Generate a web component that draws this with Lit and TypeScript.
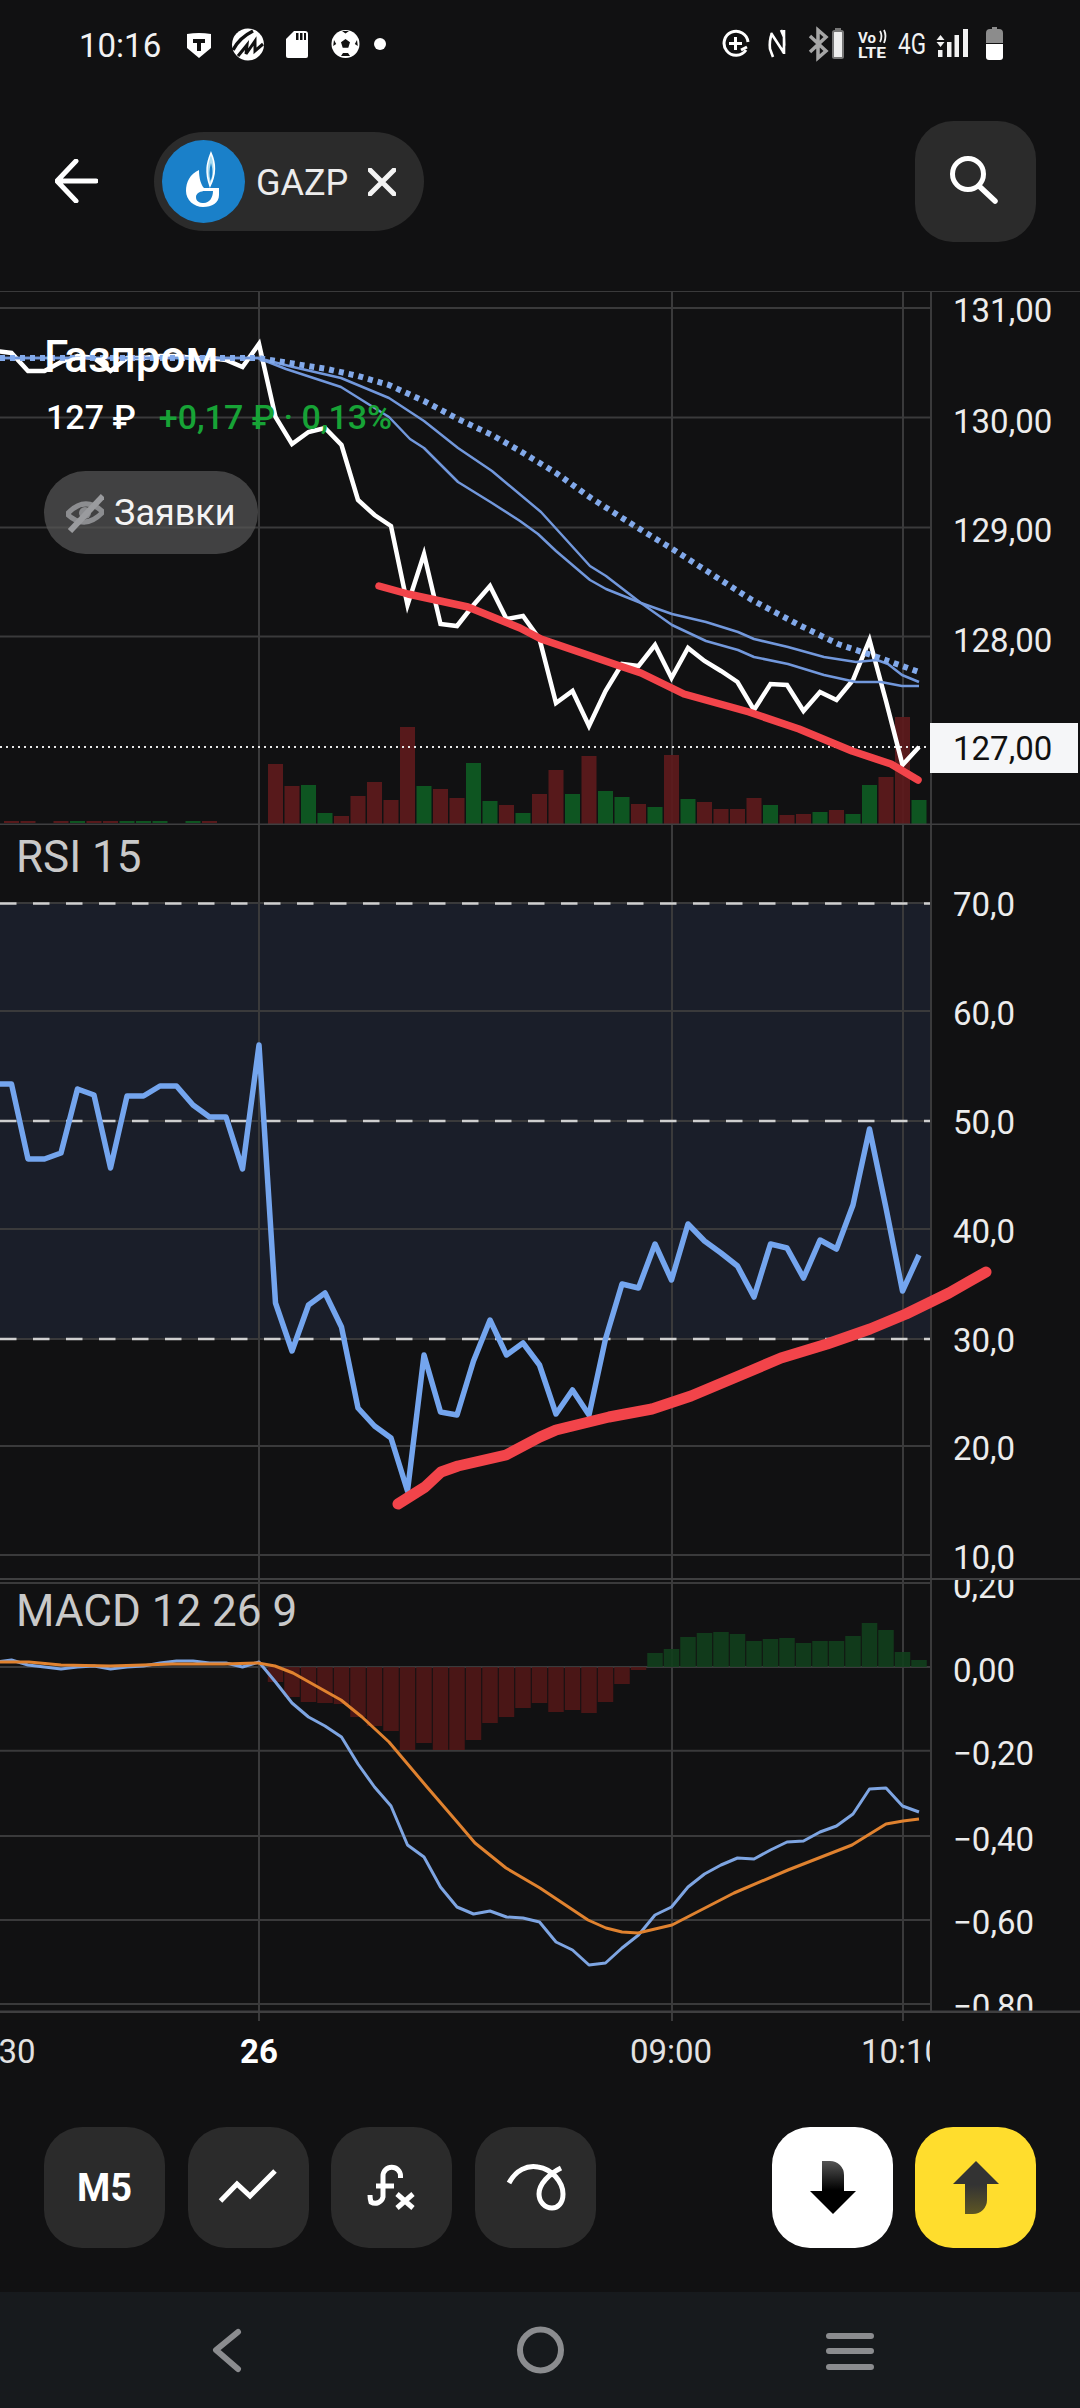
import { LitElement, html, svg, css } from 'lit';
import { customElement } from 'lit/decorators.js';

// all chart data is in page pixels, each pane's viewBox starts at its page y
const STEP = 16.5;
const ORIGIN = 259;
const FIRST = -16;
const CHART_RIGHT = 930;
const VERTICALS = [259, 672, 903];

const barX = (i: number) => ORIGIN + STEP * i;
const series = (ys: number[]) => ys.map((y, n) => `${barX(FIRST + n)},${y}`).join(' ');
const points = (pts: number[][]) => pts.map((p) => p.join(',')).join(' ');

const PRICE = [
  351, 353, 371, 371, 362, 356, 358, 371, 358, 358, 356, 356, 358, 358, 360, 367, 344, 417, 444, 432, 428, 445, 500,
  515, 526, 605, 554, 624, 626, 605, 586, 619, 616, 639, 703, 691, 726, 691, 664, 666, 645, 678, 648, 661, 671, 682,
  710, 684, 685, 711, 692, 700, 680, 640, 701, 765, 747,
];
const EMA_A = [
  [0, 358], [258, 358], [293, 367], [341, 378], [389, 398], [424, 421], [458, 448], [492, 471], [541, 512], [590, 566],
  [606, 576], [641, 603], [672, 625], [706, 641], [738, 650], [754, 657], [788, 664], [824, 675], [856, 682], [881, 682],
  [902, 686], [919, 686],
];
const EMA_B = [
  [0, 358], [258, 358], [286, 369], [341, 387], [389, 417], [410, 439], [424, 448], [458, 482], [492, 503], [520, 521],
  [538, 534], [556, 551], [590, 580], [606, 589], [641, 603], [672, 614], [706, 622], [738, 632], [754, 639], [788, 647],
  [824, 657], [856, 662], [877, 660], [888, 664], [902, 675], [919, 682],
];
const EMA_SLOW = [
  [0, 358], [258, 358], [327, 369], [358, 376], [389, 385], [424, 401], [458, 419], [492, 435], [520, 451], [556, 473],
  [591, 498], [638, 528], [674, 550], [713, 575], [752, 600], [799, 625], [838, 644], [877, 657], [919, 672],
];
const DRAWN_MAIN = [
  [379, 586], [408, 594], [468, 607], [520, 628], [541, 639], [620, 666], [641, 673], [684, 694], [749, 712], [799, 729],
  [852, 751], [891, 764], [918, 780],
];
const DRAWN_RSI = [
  [398, 1504], [425, 1487], [441, 1472], [458, 1466], [506, 1455], [540, 1437], [556, 1430], [609, 1417], [652, 1409],
  [691, 1396], [741, 1375], [781, 1358], [827, 1344], [870, 1329], [906, 1314], [949, 1293], [970, 1281], [986, 1272],
];
const RSI = [
  1084, 1084, 1159, 1159, 1153, 1089, 1095, 1168, 1096, 1096, 1086, 1086, 1105, 1117, 1117, 1169, 1045, 1303, 1351,
  1305, 1293, 1327, 1408, 1426, 1438, 1491, 1355, 1412, 1415, 1361, 1320, 1355, 1343, 1365, 1414, 1390, 1415, 1339,
  1284, 1288, 1244, 1280, 1224, 1241, 1253, 1266, 1297, 1244, 1248, 1278, 1240, 1249, 1205, 1129, 1208, 1291, 1255,
];
const MACD = [
  1662, 1660, 1665, 1667, 1669, 1667, 1666, 1669, 1667, 1666, 1663, 1661, 1661, 1663, 1663, 1667, 1662, 1682, 1703,
  1717, 1726, 1737, 1764, 1787, 1806, 1845, 1857, 1887, 1907, 1914, 1911, 1917, 1918, 1922, 1942, 1950, 1965, 1963,
  1948, 1935, 1915, 1907, 1887, 1874, 1865, 1858, 1859, 1850, 1842, 1841, 1832, 1826, 1814, 1789, 1788, 1806, 1812,
];
const SIGNAL = [
  [0, 1662], [29, 1662], [61, 1665], [110, 1666], [143, 1665], [172, 1664], [224, 1664], [258, 1663], [275, 1666],
  [293, 1673], [341, 1700], [362, 1717], [389, 1742], [427, 1787], [458, 1823], [475, 1843], [506, 1868], [540, 1888],
  [588, 1920], [606, 1928], [622, 1932], [638, 1933], [672, 1925], [734, 1893], [788, 1870], [852, 1845], [886, 1824],
  [903, 1821], [919, 1819],
];

// volume bars from i=1: top y and colour
const VOLUME: [number, 'r' | 'g'][] = [
  [764, 'r'], [786, 'r'], [785, 'g'], [813, 'g'], [816, 'r'], [796, 'r'], [782, 'r'], [800, 'r'], [727, 'r'], [786, 'g'],
  [789, 'r'], [798, 'r'], [763, 'g'], [801, 'g'], [805, 'r'], [813, 'g'], [794, 'r'], [770, 'r'], [794, 'g'], [756, 'r'],
  [791, 'g'], [797, 'g'], [804, 'r'], [807, 'g'], [755, 'r'], [799, 'g'], [802, 'r'], [809, 'r'], [809, 'r'], [798, 'r'],
  [805, 'g'], [815, 'r'], [814, 'r'], [812, 'g'], [810, 'r'], [814, 'g'], [785, 'g'], [777, 'r'], [717, 'r'], [800, 'g'],
];
const TINY_VOLUME: [number, 'r' | 'g'][] = [
  [-15, 'r'], [-14, 'r'], [-12, 'r'], [-11, 'g'], [-10, 'r'], [-9, 'r'], [-8, 'g'], [-7, 'g'], [-6, 'g'], [-4, 'g'], [-3, 'r'],
];
// macd histogram from i=1, far end of each bar
const HIST = [
  1682, 1697, 1702, 1703, 1704, 1717, 1726, 1731, 1750, 1743, 1750, 1750, 1740, 1723, 1717, 1708, 1703, 1712, 1710, 1713,
  1702, 1684, 1670, 1653, 1649, 1637, 1633, 1632, 1634, 1641, 1639, 1638, 1643, 1641, 1641, 1636, 1623, 1630, 1652, 1660,
];
const HIST_ZERO = 1667;

const PRICE_LABELS: [string, number][] = [['131,00', 322], ['130,00', 433], ['129,00', 542], ['128,00', 652]];
const RSI_LABELS: [string, number][] = [
  ['70,0', 916], ['60,0', 1025], ['50,0', 1134], ['40,0', 1243], ['30,0', 1352], ['20,0', 1460], ['10,0', 1569],
];
const MACD_LABELS: [string, number][] = [
  ['0,20', 1598], ['0,00', 1682], ['−0,20', 1765], ['−0,40', 1851], ['−0,60', 1934], ['−0,80', 2018],
];

const hLines = (ys: number[]) =>
  ys.map((y) => svg`<line class="grid" x1="0" x2=${CHART_RIGHT} y1=${y} y2=${y}></line>`);
const vLines = (y1: number, y2: number) =>
  VERTICALS.map((x) => svg`<line class="grid" x1=${x} x2=${x} y1=${y1} y2=${y2}></line>`);
const labels = (items: [string, number][]) =>
  items.map(([t, y]) => svg`<text class="axis-label" x="953" y=${y}>${t}</text>`);

@customElement('app-root')
export class AppRoot extends LitElement {
  static styles = css`
    :host {
      display: block;
      width: 1080px;
      height: 2408px;
      background: #111112;
      color: #fff;
      font-family: Roboto, 'Noto Sans', sans-serif;
      overflow: hidden;
    }
    svg {
      display: block;
    }
    .status {
      height: 90px;
      display: flex;
      align-items: center;
      justify-content: space-between;
      padding: 0 77px 0 79px;
    }
    .status-left {
      display: flex;
      align-items: center;
      gap: 26px;
    }
    .time {
      font-size: 33px;
      color: #f2f2f2;
    }
    .toolbar {
      height: 201px;
      box-sizing: border-box;
      padding: 31px 44px 0 55px;
      display: flex;
      align-items: flex-start;
    }
    .back {
      margin: 38px 56px 0 0;
    }
    .chip {
      height: 99px;
      margin-top: 11px;
      width: 270px;
      box-sizing: border-box;
      padding-left: 8px;
      border-radius: 50px;
      background: #2b2b2b;
      display: flex;
      align-items: center;
    }
    .chip-name {
      font-size: 36px;
      line-height: 44px;
      padding-top: 2px;
      color: #ececec;
      margin: 0 20px 0 11px;
    }
    .square {
      width: 121px;
      height: 121px;
      border-radius: 38px;
      background: #2b2b2b;
      display: flex;
      align-items: center;
      justify-content: center;
      flex: none;
    }
    .search {
      margin-left: auto;
    }
    .pane {
      position: relative;
    }
    .grid {
      stroke: #3a3a3b;
      stroke-width: 2;
    }
    .edge {
      stroke: #3f3f40;
      stroke-width: 3;
    }
    .band {
      fill: #1a1e29;
    }
    .dash {
      stroke: #cfcfcf;
      stroke-width: 2.5;
      stroke-dasharray: 16.5 16.5;
    }
    .last-price {
      stroke: #e8e8e8;
      stroke-width: 2;
      stroke-dasharray: 2 4;
    }
    .line {
      fill: none;
      stroke-linejoin: round;
    }
    .price-line {
      stroke: #fff;
      stroke-width: 4.5;
      stroke-linejoin: miter;
    }
    .ema {
      stroke: #7298dc;
      stroke-width: 2.5;
    }
    .ema-slow {
      stroke: #82a9ea;
      stroke-width: 6;
      stroke-dasharray: 5 5;
    }
    .drawn {
      stroke: #f2444a;
      stroke-linecap: round;
    }
    .rsi-line {
      stroke: #74a5ee;
      stroke-width: 5.5;
    }
    .macd-line {
      stroke: #7ea5e2;
      stroke-width: 3;
    }
    .signal-line {
      stroke: #e0822f;
      stroke-width: 3;
    }
    .vol-r {
      fill: #5c1a1c;
      fill-opacity: 0.93;
    }
    .vol-g {
      fill: #0e5a22;
      fill-opacity: 0.93;
    }
    .hist-r {
      fill: #4e1717;
      fill-opacity: 0.95;
    }
    .hist-g {
      fill: #123f1d;
      fill-opacity: 0.9;
    }
    .axis-label {
      font-size: 33px;
      fill: #ececec;
    }
    .tag {
      fill: #f5f6f8;
    }
    .tag-label {
      font-size: 33px;
      fill: #111;
    }
    .pane-title {
      font-size: 44px;
      fill: #c9c9c9;
    }
    .tick {
      font-size: 33px;
      fill: #e2e2e2;
      text-anchor: middle;
    }
    .tick-day {
      font-weight: 700;
      fill: #fff;
    }
    .legend {
      position: absolute;
      left: 44px;
      top: 44px;
    }
    .legend-name {
      font-size: 44px;
      line-height: 44px;
      font-weight: 500;
    }
    .legend-row {
      margin-top: 18px;
      display: flex;
      gap: 23px;
      font-size: 34px;
      line-height: 40px;
      font-weight: 500;
      padding-left: 2px;
    }
    .legend-change {
      color: #17a336;
    }
    .orders {
      margin-top: 34px;
      width: 214px;
      height: 83px;
      box-sizing: border-box;
      padding-left: 22px;
      border-radius: 42px;
      background: rgba(84, 84, 84, 0.72);
      display: flex;
      align-items: center;
      gap: 10px;
      font-size: 36px;
      color: #f4f4f4;
    }
    .actions {
      height: 165px;
      box-sizing: border-box;
      padding: 0 44px 44px;
      display: flex;
      gap: 22.5px;
    }
    .m5 {
      font-size: 38px;
      font-weight: 700;
    }
    .sell {
      background: #fff;
      margin-left: auto;
    }
    .buy {
      background: #ffdd2d;
    }
    .nav {
      height: 116px;
      background: #171a1d;
    }
    .icon-stroke {
      fill: none;
      stroke: #fff;
      stroke-width: 5;
    }
    .nav-stroke {
      fill: none;
      stroke: #8b8c8f;
      stroke-width: 6;
      stroke-linecap: round;
      stroke-linejoin: round;
    }
    .sb-text {
      font-size: 29px;
      fill: #f2f2f2;
    }
    .sb-small {
      font-size: 15px;
      font-weight: 700;
      fill: #f2f2f2;
    }
  `;

  private statusLeftIcons() {
    return html`<svg width="200" height="50" viewBox="186 20 200 50">
      <path d="M186 34 q12 -2 24 0 v14 l-12 10 l-12 -10z" fill="#fff"></path>
      <path d="M192 39 h12 v4 h-4 v8 h-4 v-8 h-4z" fill="#111"></path>
      <circle cx="247" cy="44.5" r="16" fill="#fff"></circle>
      <path d="M232 50 Q238 38 252 31" fill="none" stroke="#111" stroke-width="3.5"></path>
      <path d="M237 56 L246 45 L245 54 L254 41 L254 51 L262 44" fill="none" stroke="#111" stroke-width="3"></path>
      <path d="M293 31 h11 q3 0 3 3 v22 q0 2 -2 2 h-18 q-2 0 -2 -2 v-17z" fill="#fff"></path>
      <path d="M295 33 h2.5 v7 h-2.5z M299 33 h2.5 v7 h-2.5z M303 33 h2 v7 h-2z" fill="#111"></path>
      <circle cx="344.5" cy="44" r="14" fill="#fff"></circle>
      <path
        d="M344.5 39 l4.5 3.3 -1.7 5.4 h-5.6 l-1.7 -5.4z M341 31 h7 l-3.5 2.5z M333 40 l-0.8 6 3 -2z M356 40 l0.8 6 -3 -2z M340 56 h9 l-2 -3 h-5z"
        fill="#111"
      ></path>
      <circle cx="379" cy="44" r="6" fill="#fff"></circle>
    </svg>`;
  }

  private statusRightIcons() {
    return html`<svg width="281" height="50" viewBox="722 20 281 50">
      <path d="M746 50 A12 12 0 1 1 748 42" fill="none" stroke="#fff" stroke-width="3"></path>
      <path d="M741 50 L747 47" stroke="#fff" stroke-width="3"></path>
      <path d="M735.5 37 v13 M729 43.5 h13" stroke="#fff" stroke-width="3"></path>
      <path d="M772 33 q-3 8 -2 16 l3 8 M781 30 l3 7 q1 8 -1 16 M771 33 l13 20 M784 30 v24" fill="none" stroke="#fff" stroke-width="2.6"></path>
      <path d="M810 36 L826 51 L818 58 V30 L826 37 L810 52" fill="none" stroke="#a6a6a6" stroke-width="3.5"></path>
      <rect x="833" y="31" width="10" height="27" rx="1.5" fill="#eee" stroke="#777" stroke-width="2"></rect>
      <rect x="835" y="28" width="6" height="3" fill="#777"></rect>
      <text class="sb-small" x="858" y="43">Vo</text>
      <path d="M880 31 q3 5 0 11 M884 30 q3 6 0 13" fill="none" stroke="#f2f2f2" stroke-width="1.8"></path>
      <text class="sb-small" x="858" y="57.5" textLength="28" lengthAdjust="spacingAndGlyphs">LTE</text>
      <text class="sb-text" x="898" y="54" textLength="28" lengthAdjust="spacingAndGlyphs">4G</text>
      <path d="M940.5 35 l4 5 h-8z M940.5 47 l4 -5 h-8z" fill="#f2f2f2"></path>
      <path d="M938 50 h4.5 v7 h-4.5z M947 42 h4.5 v15 h-4.5z M954.5 35 h4.5 v22 h-4.5z M963 29 h5 v28 h-5z" fill="#f2f2f2"></path>
      <path d="M992 27 h5 v2 h2 q4 0 4 4 v10 h-17 v-10 q0 -4 4 -4 h2z" fill="#8c8c8c"></path>
      <path d="M986 44 h17 v13 q0 3 -3 3 h-11 q-3 0 -3 -3z" fill="#fff"></path>
    </svg>`;
  }

  private gazpromLogo() {
    return html`<svg width="83" height="83" viewBox="162 140 83 83">
      <circle cx="203.5" cy="181.5" r="41.5" fill="#1a80c9"></circle>
      <path
        fill-rule="evenodd"
        d="M199 170 C190 174 186 182 186 191 C186 200 194 207 203 207 C212 207 219 203 219 195 V188 H204 C201 185 199 178 199 170Z M196 197 C196 193 201 191 205 191 H213 C213 198 209 203 204 203 C199 203 196 201 196 197Z"
        fill="#fff"
      ></path>
      <path d="M211 153 C207 163 205 172 210 186 C216 174 216 164 211 153Z" fill="#a9dcf2" stroke="#fff" stroke-width="1.5"></path>
      <path d="M211 163 C209 170 209 175 210.5 181 C213 175 213 170 211 163Z" fill="#1a80c9"></path>
    </svg>`;
  }

  private mainPane() {
    return svg`
      ${hLines([308, 417.5, 527.5, 636.5])}
      ${vLines(291, 825)}
      <line class="grid" x1="931" x2="931" y1="291" y2="825"></line>
      <line class="grid" x1="0" x2="1080" y1="291" y2="291"></line>
      ${TINY_VOLUME.map(
        ([i, c]) => svg`<rect class=${`vol-${c}`} x=${barX(i) - 7.5} y="821" width="15" height="2"></rect>`,
      )}
      ${VOLUME.map(
        ([top, c], n) =>
          svg`<rect class=${`vol-${c}`} x=${barX(n + 1) - 7.5} y=${top} width="15" height=${824 - top}></rect>`,
      )}
      <line class="last-price" x1="0" x2=${CHART_RIGHT} y1="747" y2="747"></line>
      <polyline class="line price-line" points=${series(PRICE)}></polyline>
      <polyline class="line ema" points=${points(EMA_A)}></polyline>
      <polyline class="line ema" points=${points(EMA_B)}></polyline>
      <polyline class="line ema-slow" points=${points(EMA_SLOW)}></polyline>
      <polyline class="line drawn" stroke-width="7.5" points=${points(DRAWN_MAIN)}></polyline>
      <line class="edge" x1="0" x2="1080" y1="825" y2="825"></line>
      ${labels(PRICE_LABELS)}
      <rect class="tag" x="930" y="723" width="148" height="50"></rect>
      <text class="tag-label" x="953" y="760">127,00</text>
    `;
  }

  private rsiPane() {
    return svg`
      <rect class="band" x="0" y="903" width=${CHART_RIGHT} height="436"></rect>
      ${hLines([903, 1011, 1121, 1229, 1339, 1446, 1555])}
      ${vLines(825, 1578)}
      <line class="grid" x1="931" x2="931" y1="825" y2="1578"></line>
      ${[903.5, 1121, 1339].map(
        (y) => svg`<line class="dash" x1="0" x2=${CHART_RIGHT} y1=${y} y2=${y}></line>`,
      )}
      <text class="pane-title" x="16" y="872">RSI 15</text>
      <polyline class="line rsi-line" points=${series(RSI)}></polyline>
      <polyline class="line drawn" stroke-width="11" points=${points(DRAWN_RSI)}></polyline>
      ${labels(RSI_LABELS)}
    `;
  }

  private macdPane() {
    return svg`
      ${hLines([1583, 1750.7, 1836, 1920, 2004, HIST_ZERO])}
      ${vLines(1578, 2013)}
      <line class="grid" x1="931" x2="931" y1="1578" y2="2013"></line>
      ${HIST.map((end, n) => {
        const up = end < HIST_ZERO;
        return svg`<rect class=${up ? 'hist-g' : 'hist-r'} x=${barX(n + 1) - 7.75} y=${Math.min(end, HIST_ZERO)}
          width="15.5" height=${Math.abs(end - HIST_ZERO)}></rect>`;
      })}
      <text class="pane-title" x="16" y="1626">MACD 12 26 9</text>
      <polyline class="line macd-line" points=${series(MACD)}></polyline>
      <polyline class="line signal-line" points=${points(SIGNAL)}></polyline>
      ${labels(MACD_LABELS)}
      <line class="edge" x1="0" x2="1080" y1="1578.5" y2="1578.5"></line>
      <line class="edge" x1="0" x2="1080" y1="2012" y2="2012"></line>
    `;
  }

  render() {
    return html`
      <div class="status">
        <div class="status-left">
          <span class="time">10:16</span>
          ${this.statusLeftIcons()}
        </div>
        ${this.statusRightIcons()}
      </div>

      <div class="toolbar">
        <svg class="back" width="43" height="44" viewBox="55 159 43 44">
          <path d="M96 181 H58 M76 161 L57 181 L76 201" class="icon-stroke" stroke-linecap="round" stroke-linejoin="round"></path>
        </svg>
        <div class="chip">
          ${this.gazpromLogo()}
          <span class="chip-name">GAZP</span>
          <svg width="28" height="28" viewBox="0 0 28 28">
            <path d="M2 2 L26 26 M26 2 L2 26" fill="none" stroke="#f4f4f4" stroke-width="5" stroke-linecap="round"></path>
          </svg>
        </div>
        <div class="square search">
          <svg width="121" height="121" viewBox="915 121 121 121">
            <circle cx="968" cy="174" r="15.5" fill="none" stroke="#fff" stroke-width="5"></circle>
            <path d="M979 186 L995 201" stroke="#fff" stroke-width="5.5" stroke-linecap="round"></path>
          </svg>
        </div>
      </div>

      <div class="pane">
        <svg width="1080" height="534" viewBox="0 291 1080 534">${this.mainPane()}</svg>
        <div class="legend">
          <div class="legend-name">Газпром</div>
          <div class="legend-row">
            <span>127 ₽</span>
            <span class="legend-change">+0,17 ₽ · 0,13%</span>
          </div>
          <div class="orders">
            <svg width="38" height="40" viewBox="65 492 38 40">
              <path d="M66 513 Q84 494 102 511 Q84 530 66 513Z" fill="none" stroke="#8c8d90" stroke-width="5"></path>
              <circle cx="84" cy="512" r="6" fill="#8c8d90"></circle>
              <path d="M69 530 L102 495" stroke="#9a9b9e" stroke-width="6"></path>
            </svg>
            Заявки
          </div>
        </div>
      </div>
      <svg width="1080" height="753" viewBox="0 825 1080 753">${this.rsiPane()}</svg>
      <svg width="1080" height="435" viewBox="0 1578 1080 435">${this.macdPane()}</svg>
      <svg width="1080" height="114" viewBox="0 2013 1080 114">
        ${vLines(2013, 2021)}
        <svg x="0" y="2013" width=${CHART_RIGHT} height="114" viewBox="0 2013 930 114">
          <text class="tick" x="17" y="2063">30</text>
          <text class="tick tick-day" x="259" y="2063">26</text>
          <text class="tick" x="671" y="2063">09:00</text>
          <text class="tick" x="902" y="2063">10:10</text>
        </svg>
      </svg>

      <div class="actions">
        <div class="square m5">M5</div>
        <div class="square">
          <svg width="121" height="121" viewBox="187 2127 121 121">
            <path d="M219.5 2201 L236 2184 L249 2196 L274 2171" class="icon-stroke"></path>
          </svg>
        </div>
        <div class="square">
          <svg width="121" height="121" viewBox="330 2127 121 121">
            <path
              d="M399.5 2178 V2176 A8.5 8.5 0 0 0 382 2176 V2197 A8 8 0 0 1 370 2202 Q369 2199 369 2195 M375 2186 H393"
              class="icon-stroke"
            ></path>
            <path d="M396 2194 L412 2208 M412 2194 L396 2208" class="icon-stroke"></path>
          </svg>
        </div>
        <div class="square">
          <svg width="121" height="121" viewBox="473 2127 121 121">
            <path
              d="M507 2183 C514 2170 525 2165 536 2167 C550 2169 561 2182 561 2194 C561 2203 556 2208 550 2208 C543 2208 537 2202 537 2194 C537 2184 547 2174 559 2168"
              class="icon-stroke"
            ></path>
          </svg>
        </div>
        <div class="square sell">
          <svg width="121" height="121" viewBox="772 2127 121 121">
            <defs>
              <linearGradient id="sell-fade" x1="0" y1="0" x2="0" y2="1">
                <stop offset="0" stop-color="#555"></stop>
                <stop offset="0.55" stop-color="#000"></stop>
              </linearGradient>
            </defs>
            <path d="M822 2161 h8 a14 14 0 0 1 14 14 v16 h12 L833 2214 L810 2191 h12Z" fill="url(#sell-fade)"></path>
          </svg>
        </div>
        <div class="square buy">
          <svg width="121" height="121" viewBox="915 2127 121 121">
            <defs>
              <linearGradient id="buy-fade" x1="0" y1="0" x2="0" y2="1">
                <stop offset="0.45" stop-color="#333"></stop>
                <stop offset="1" stop-color="#5e5624"></stop>
              </linearGradient>
            </defs>
            <path d="M976 2161 L999 2184 H987 V2200 a14 14 0 0 1 -14 14 H965 V2184 H953Z" fill="url(#buy-fade)"></path>
          </svg>
        </div>
      </div>

      <div class="nav">
        <svg width="1080" height="116" viewBox="0 2292 1080 116">
          <path d="M238 2332 L216 2350 L238 2369" class="nav-stroke"></path>
          <ellipse cx="540.5" cy="2350" rx="20.5" ry="20.5" class="nav-stroke"></ellipse>
          <path d="M829 2336 H871 M829 2351 H871 M829 2367 H871" class="nav-stroke"></path>
        </svg>
      </div>
    `;
  }
}
